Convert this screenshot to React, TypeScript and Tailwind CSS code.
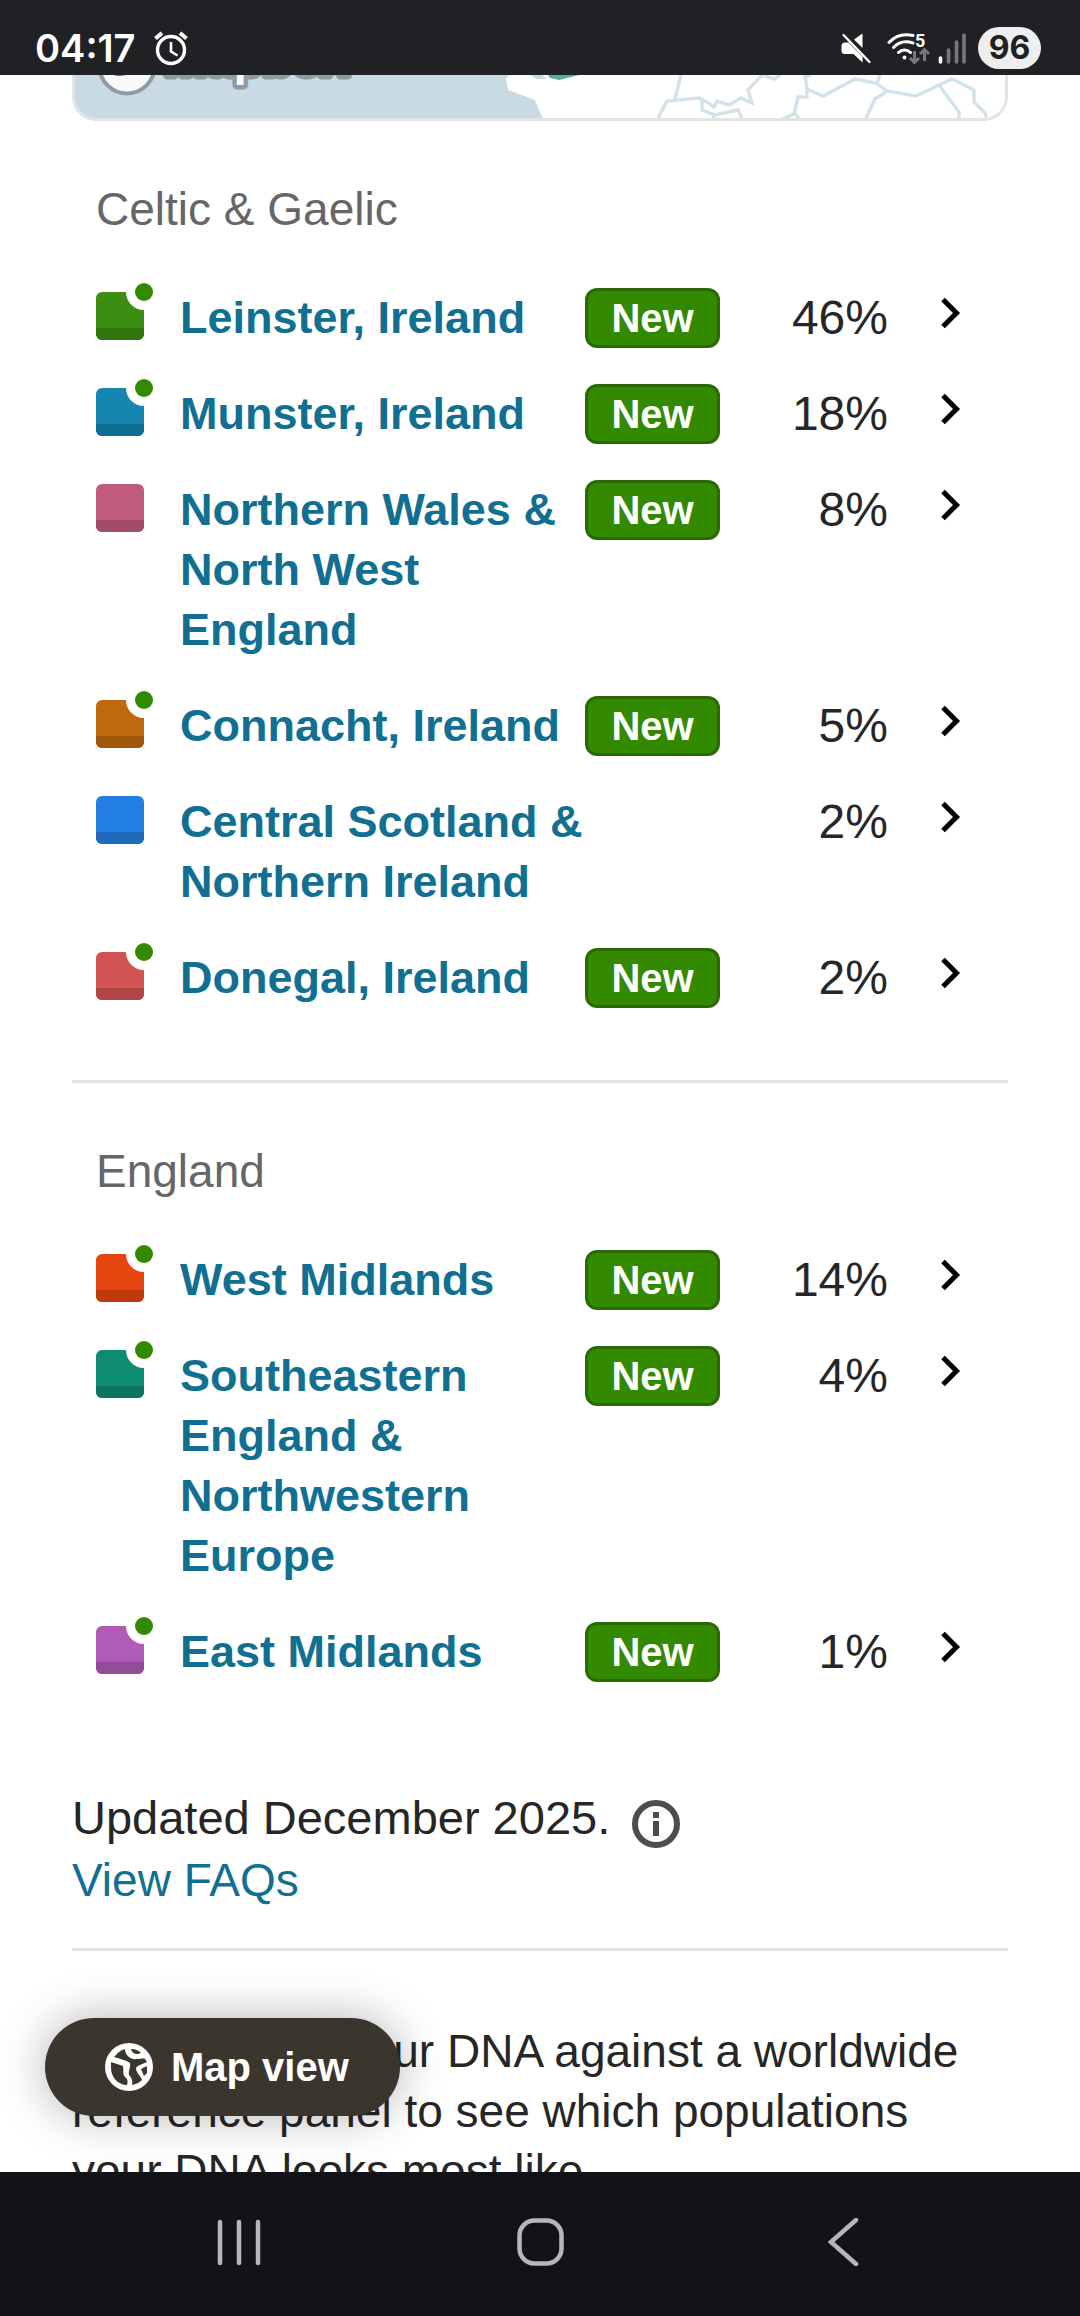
import { clsx } from 'clsx'

interface Region {
  name: string
  percent: number
  isNew?: boolean
  hasDot?: boolean
  color: string
  shade: string
}

interface RegionGroup {
  title: string
  regions: Region[]
}

const groups: RegionGroup[] = [
  {
    title: 'Celtic & Gaelic',
    regions: [
      { name: 'Leinster, Ireland', percent: 46, isNew: true, hasDot: true, color: '#3b8e12', shade: '#31760f' },
      { name: 'Munster, Ireland', percent: 18, isNew: true, hasDot: true, color: '#1586b0', shade: '#0f6f93' },
      { name: 'Northern Wales & North West England', percent: 8, isNew: true, color: '#c15c7f', shade: '#a14c6a' },
      { name: 'Connacht, Ireland', percent: 5, isNew: true, hasDot: true, color: '#c0690c', shade: '#a0570a' },
      { name: 'Central Scotland & Northern Ireland', percent: 2, color: '#247fe2', shade: '#1e6abc' },
      { name: 'Donegal, Ireland', percent: 2, isNew: true, hasDot: true, color: '#d25353', shade: '#af4545' },
    ],
  },
  {
    title: 'England',
    regions: [
      { name: 'West Midlands', percent: 14, isNew: true, hasDot: true, color: '#e84610', shade: '#c13a0d' },
      { name: 'Southeastern England & Northwestern Europe', percent: 4, isNew: true, hasDot: true, color: '#0e8c71', shade: '#0b755e' },
      { name: 'East Midlands', percent: 1, isNew: true, hasDot: true, color: '#b05bb8', shade: '#934c99' },
    ],
  },
]

export default function App() {
  return (
    <div className="flex h-screen flex-col overflow-hidden bg-white font-['Liberation_Sans',Arial,sans-serif] text-[46px] leading-[60px] text-[#262626]">
      <StatusBar />
      <main className="relative min-h-0 flex-1 overflow-hidden px-[72px]">
        <MapPreview />
        <RegionSection group={groups[0]} />
        <hr className="border-t-3 border-[#e4e4e4]" />
        <RegionSection group={groups[1]} />
        <UpdatedNote />
        <hr className="border-t-3 border-[#e4e4e4]" />
        <p className="pt-[70px]">
          We compare your DNA against a worldwide reference panel to see which
          populations your DNA looks most like.
        </p>
        <MapViewButton />
      </main>
      <NavBar />
    </div>
  )
}

function StatusBar() {
  return (
    <header className="flex h-[75px] shrink-0 items-center justify-between bg-[#202125] pt-5 pr-[39px] pl-[35px] text-white">
      <div className="flex items-center gap-[18px]">
        <time className="font-['Inter',sans-serif] text-[38px] leading-[48px] font-semibold">
          04:17
        </time>
        <svg className="h-9 w-9" viewBox="0 0 36 36" fill="none" stroke="currentColor" aria-label="Alarm">
          <circle cx="18" cy="20" r="13.5" strokeWidth="3.4" />
          <path d="M2.500 8.500 9 3M33.500 8.500 27 3" strokeWidth="4.200" />
          <path d="M18 12v9.500l6.500 4" strokeWidth="2.600" />
        </svg>
      </div>
      <div className="flex items-center">
        <svg className="mr-4 h-8 w-[30px]" viewBox="0 0 30 32" fill="currentColor" aria-label="Muted">
          <path d="M21.500 1.500v14.500L13 7.500Z" />
          <path d="M4 10.500h3.500L21.500 24.500v6L12.500 22H4q-3.500 0-3.500-3.500v-4.500q0-3.500 3.500-3.500Z" />
          <path d="M2.500 3 28.500 30" stroke="currentColor" strokeWidth="2.400" strokeLinecap="round" />
        </svg>
        <svg className="mr-2 h-8 w-[43px]" viewBox="0 0 43 32" fill="none" stroke="currentColor" aria-label="Wi-Fi">
          <path d="M2 10.500C8 4 17 1.500 26 3.500" strokeWidth="3" strokeLinecap="round" />
          <path d="M6.500 15.500C12 9.500 19 8.500 26 11" strokeWidth="3" strokeLinecap="round" />
          <path d="M11.500 20.500c3.500-3.500 8.500-3.500 12 0" strokeWidth="3" strokeLinecap="round" />
          <circle cx="17.500" cy="25.500" r="2" fill="currentColor" stroke="none" />
          <text x="28" y="14.500" fontSize="18" fontWeight="700" fill="currentColor" stroke="none" fontFamily="Roboto, sans-serif">
            5
          </text>
          <g stroke="#77787b" strokeWidth="3">
            <path d="M27.500 19v11M23 26l4.500 4.500L32 26M37.500 29V18M33 22l4.500-4.500L42 22" />
          </g>
        </svg>
        <svg className="mr-3 h-8 w-7" viewBox="0 0 28 32" strokeWidth="3.600" strokeLinecap="round" aria-label="Signal">
          <path d="M2.500 26v4" stroke="#fff" />
          <path d="M10.500 18v12M18.500 10v20M26 3v27" stroke="#77787b" />
        </svg>
        <span className="flex h-[42px] w-[63px] items-center justify-center rounded-full bg-[#eee] font-['Inter',sans-serif] text-[32px] leading-[42px] font-bold text-[#202125]">
          96
        </span>
      </div>
    </header>
  )
}

function MapPreview() {
  return (
    <div className="h-[46px] overflow-hidden rounded-b-[24px] border-3 border-t-0 border-[#e4e4e4] bg-white">
      <svg className="h-[43px] w-full" viewBox="0 0 930 43" preserveAspectRatio="xMinYMin slice" role="img" aria-label="Map">
        <path d="M0 0H434L431 4L433 15L460 25L464 35L468 43H0Z" fill="#c8dae3" />
        <path d="M455 0h12l5 4h-10Z" fill="#c8dae3" />
        <path d="M473 0h31l-20 5-9-2Z" fill="#5aad9a" />
        <circle cx="52" cy="-9" r="27.500" fill="#f8fafc" stroke="#8e9ba1" strokeWidth="4" />
        <path d="M38 0q6 2 13 0Z" fill="#6b7980" />
        <text x="89" y="0" fontSize="48" fontWeight="700" fill="#fff" stroke="#8e9ba1" strokeWidth="9" paintOrder="stroke" strokeLinejoin="round">
          mapbox
        </text>
        <g fill="none" stroke="#d3e1e9" strokeWidth="3.400">
          <path d="M606 0 600 24M583 43 592 26l32-3 8 4 7 5 3-6 12 4 12-7 11 5-4-13L687 0l12 4 6-4" />
          <path d="M627 25v10l13 5 23-5 4 8M638 43l2-4M730 0l2 14v8h-9l-4 17-14 6M719 38l5 5" />
          <path d="M728 3 736 0M732 14l16 7 32-17 21 4 11 8 29 5 36-17 22 11v12l11 11 2 7M802 8l3-8M811 17l-11 7-9 19M864 10l20 27v6" />
        </g>
      </svg>
    </div>
  )
}

function RegionSection({ group }: { group: RegionGroup }) {
  return (
    <section className="px-6 pt-[58px] pb-[72px]">
      <h2 className="text-[#666]">{group.title}</h2>
      <ul className="mt-[49px] flex flex-col gap-9">
        {group.regions.map((region) => (
          <RegionRow key={region.name} region={region} />
        ))}
      </ul>
    </section>
  )
}

function RegionRow({ region }: { region: Region }) {
  return (
    <li>
      <a href="#region" className="flex items-start">
        <Swatch color={region.color} shade={region.shade} hasDot={region.hasDot} />
        <span className="ml-9 min-w-0 flex-1 text-[45px] font-bold text-[#117092]">
          {region.name}
        </span>
        {region.isNew && (
          <span className="flex h-[60px] w-[135px] shrink-0 items-center justify-center rounded-xl border-3 border-[#2a6a05] bg-[#338a00] text-[40px] font-bold text-white">
            New
          </span>
        )}
        <span className={clsx('shrink-0 text-right text-[48px]', region.isNew ? 'w-[168px]' : 'w-[300px]')}>
          {region.percent}%
        </span>
        <svg className="mr-2 ml-10 h-12 w-12 shrink-0" viewBox="0 0 48 48" fill="none" stroke="#000" strokeWidth="5" aria-hidden>
          <path d="M15 11.500 28.500 25 15 38.500" />
        </svg>
      </a>
    </li>
  )
}

function Swatch({ color, shade, hasDot }: { color: string; shade: string; hasDot?: boolean }) {
  return (
    <svg className="mt-1 h-12 w-12 shrink-0 overflow-visible" viewBox="0 0 48 48" aria-hidden>
      <rect width="48" height="48" rx="6" fill={color} />
      <path d="M0 36h48v6a6 6 0 0 1-6 6H6a6 6 0 0 1-6-6Z" fill={shade} />
      {hasDot && (
        <>
          <circle cx="48" cy="0" r="18" fill="#fff" />
          <circle cx="48" cy="0" r="9" fill="#338a00" />
        </>
      )}
    </svg>
  )
}

function UpdatedNote() {
  return (
    <div className="pt-[34px] pb-[38px]">
      <div className="mb-0.5 flex items-end gap-[22px]">
        <p className="text-[47px]">Updated December 2025.</p>
        <button type="button" aria-label="More information">
          <svg className="h-12 w-12" viewBox="0 0 48 48" fill="none" aria-hidden>
            <circle cx="24" cy="24" r="21" stroke="#4d4d4d" strokeWidth="6" />
            <path d="M21 12h6v6h-6zM21 21h6v15h-6z" fill="#4d4d4d" />
          </svg>
        </button>
      </div>
      <a href="#faqs" className="text-[#117092]">
        View FAQs
      </a>
    </div>
  )
}

function MapViewButton() {
  return (
    <button
      type="button"
      className="absolute bottom-14 left-[45px] flex h-[98px] items-center gap-[18px] rounded-full bg-[#3a362e] pr-[51px] pl-[60px] text-[40px] font-bold text-white shadow-[0_0_48px_rgba(0,0,0,0.3)]"
    >
      <svg className="h-12 w-12" viewBox="0 0 48 48" fill="none" aria-hidden>
        <circle cx="24" cy="24" r="24" fill="currentColor" />
        <g fill="#3a362e">
          <path d="M6 19 18 23C19 27 17 31 20 34C23 36 23 39 22 42C13 42 6 34 6 25Z" />
          <path d="M11 12C14 8 17 7 20 6C20 12 25 17 32 16C36 16 38 15 40 16L42 19C38 21 33 22 31 25C31 30 36 33 37 37C34 40 31 41 27 42C28 38 27 35 24 32C23 28 26 24 25 20C21 17 15 16 9 14Z" />
          <path d="M42 23V30L39 33 36 26Z" />
          <path d="M26 6C31 6 34 8 36 10C32 12 27 11 26 6Z" />
        </g>
      </svg>
      Map view
    </button>
  )
}

function NavBar() {
  return (
    <nav className="grid h-36 shrink-0 grid-cols-[1fr_128px_1fr] items-center bg-[#121318] pb-1 text-[#b7b7ba]">
      <button type="button" aria-label="Recent apps" className="flex justify-center">
        <svg className="h-12 w-12" viewBox="0 0 48 48" stroke="currentColor" strokeWidth="4.500" strokeLinecap="round">
          <path d="M6 4v41M25 4v41M44 4v41" />
        </svg>
      </button>
      <button type="button" aria-label="Home" className="flex justify-center">
        <svg className="h-12 w-12" viewBox="0 0 48 48" fill="none" stroke="currentColor" strokeWidth="4.500">
          <rect x="3.500" y="2.500" width="42" height="43" rx="15" />
        </svg>
      </button>
      <button type="button" aria-label="Back" className="flex justify-center">
        <svg className="h-12 w-12" viewBox="0 0 48 48" fill="none" stroke="currentColor" strokeWidth="4.500" strokeLinecap="round">
          <path d="M38 2 13 24 38 46" />
        </svg>
      </button>
    </nav>
  )
}
